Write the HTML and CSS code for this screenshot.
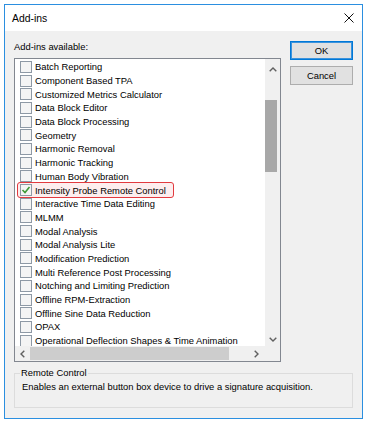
FILE: index.html
```html
<!DOCTYPE html>
<html lang="en">
<head>
    <meta charset="UTF-8">
    <meta name="viewport" content="width=device-width, initial-scale=1.0">
    <title>Add-ins</title>
    <link rel="stylesheet" href="styles.css">
</head>
<body>

<div class="dialog">
    <div class="titlebar">
        <span class="title">Add-ins</span>
        <svg class="close" width="10" height="10" viewBox="0 0 10 10">
            <path d="M0.5 0.5 L9.5 9.5 M9.5 0.5 L0.5 9.5" stroke="#111" stroke-width="1" fill="none"/>
        </svg>
    </div>

    <div class="content">
        <div class="main">
            <div class="left">
                <div class="label">Add-ins available:</div>
                <div class="listbox">
                    <ul class="items">
                        <li class="item"><span class="check"></span>Batch Reporting</li>
                        <li class="item"><span class="check"></span>Component Based TPA</li>
                        <li class="item"><span class="check"></span>Customized Metrics Calculator</li>
                        <li class="item"><span class="check"></span>Data Block Editor</li>
                        <li class="item"><span class="check"></span>Data Block Processing</li>
                        <li class="item"><span class="check"></span>Geometry</li>
                        <li class="item"><span class="check"></span>Harmonic Removal</li>
                        <li class="item"><span class="check"></span>Harmonic Tracking</li>
                        <li class="item"><span class="check"></span>Human Body Vibration</li>
                        <li class="item marked">
                            <span class="check">
                                <svg width="10" height="10" viewBox="0 0 10 10">
                                    <path d="M1.5 5 L4 7.5 L8.5 2" stroke="#3d9a35" stroke-width="1.6" fill="none"/>
                                </svg>
                            </span>Intensity Probe Remote Control
                        </li>
                        <li class="item"><span class="check"></span>Interactive Time Data Editing</li>
                        <li class="item"><span class="check"></span>MLMM</li>
                        <li class="item"><span class="check"></span>Modal Analysis</li>
                        <li class="item"><span class="check"></span>Modal Analysis Lite</li>
                        <li class="item"><span class="check"></span>Modification Prediction</li>
                        <li class="item"><span class="check"></span>Multi Reference Post Processing</li>
                        <li class="item"><span class="check"></span>Notching and Limiting Prediction</li>
                        <li class="item"><span class="check"></span>Offline RPM-Extraction</li>
                        <li class="item"><span class="check"></span>Offline Sine Data Reduction</li>
                        <li class="item"><span class="check"></span>OPAX</li>
                        <li class="item"><span class="check"></span>Operational Deflection Shapes &amp; Time Animation</li>
                    </ul>

                    <div class="vscroll">
                        <div class="arrow up">
                            <svg width="8" height="5" viewBox="0 0 8 5"><path d="M0.7 4.3 L4 1 L7.3 4.3" stroke="#606060" stroke-width="1.4" fill="none"/></svg>
                        </div>
                        <div class="track"><div class="thumb"></div></div>
                        <div class="arrow down">
                            <svg width="8" height="5" viewBox="0 0 8 5"><path d="M0.7 0.7 L4 4 L7.3 0.7" stroke="#606060" stroke-width="1.4" fill="none"/></svg>
                        </div>
                    </div>

                    <div class="hscroll">
                        <div class="arrow left-btn">
                            <svg width="5" height="8" viewBox="0 0 5 8"><path d="M4.3 0.7 L1 4 L4.3 7.3" stroke="#606060" stroke-width="1.4" fill="none"/></svg>
                        </div>
                        <div class="track"><div class="thumb"></div></div>
                        <div class="arrow right-btn">
                            <svg width="5" height="8" viewBox="0 0 5 8"><path d="M0.7 0.7 L4 4 L0.7 7.3" stroke="#606060" stroke-width="1.4" fill="none"/></svg>
                        </div>
                    </div>

                    <div class="corner"></div>
                </div>
            </div>

            <div class="buttons">
                <button class="btn default">OK</button>
                <button class="btn">Cancel</button>
            </div>
        </div>

        <fieldset class="group">
            <legend>Remote Control</legend>
            <p>Enables an external button box device to drive a signature acquisition.</p>
        </fieldset>
    </div>
</div>

</body>
</html>
```

FILE: styles.css
```css
body {
    font-family: "Liberation Sans", Arial, sans-serif;
    font-size: 9.4px;
    color: #000;
    background-color: #fff;
    margin: 0;
    padding: 0;
}
.dialog {
    margin: 4px 0 0 4px;
    width: 359px;
    height: 415px;
    box-sizing: border-box;
    border: 1px solid #2b8fe0;
    background-color: #f0f0f0;
    display: flex;
    flex-direction: column;
}
.titlebar {
    height: 26px;
    background-color: #fff;
    display: flex;
    align-items: center;
    justify-content: space-between;
    padding: 0 8px 0 7px;
}
.title {
    font-size: 10.4px;
}
.close {
    display: block;
    margin-top: -1px;
}
.content {
    flex: 1;
    padding: 10px 9px 9px 9px;
}
.main {
    display: flex;
    gap: 9px;
}
.left {
    width: 267px;
}
.label {
    height: 12px;
    line-height: 12px;
    margin-bottom: 5px;
}
.listbox {
    width: 267px;
    height: 304px;
    box-sizing: border-box;
    border: 1px solid #828790;
    background-color: #fff;
    display: grid;
    grid-template-columns: 1fr 15px;
    grid-template-rows: 1fr 15px;
}
.items {
    list-style: none;
    margin: 0;
    padding: 1px 0 0 0;
    overflow: hidden;
}
.item {
    height: 13.7px;
    display: flex;
    align-items: center;
    padding-left: 5px;
    white-space: nowrap;
    position: relative;
    z-index: 0;
}
.check {
    width: 12px;
    height: 12px;
    box-sizing: border-box;
    border: 1px solid #8e99a5;
    background-color: #f4f4f4;
    margin-right: 3px;
    display: flex;
    align-items: center;
    justify-content: center;
    flex-shrink: 0;
}
.marked::before {
    content: "";
    position: absolute;
    left: 2px;
    top: -1px;
    width: 157px;
    height: 15.5px;
    box-sizing: border-box;
    border: 1px solid #e23a3f;
    border-radius: 3px;
    background-color: #fdeeee;
    z-index: -1;
}
.vscroll {
    background-color: #f0f0f0;
    display: flex;
    flex-direction: column;
}
.vscroll .up {
    height: 20px;
}
.vscroll .down {
    height: 13px;
}
.vscroll .track {
    flex: 1;
}
.vscroll .thumb {
    margin-top: 21px;
    width: 12px;
    height: 72px;
    background-color: #a8a8a8;
}
.arrow {
    display: flex;
    align-items: center;
    justify-content: center;
}
.arrow svg {
    display: block;
}
.hscroll {
    background-color: #f0f0f0;
    display: flex;
}
.hscroll .left-btn {
    width: 15px;
}
.hscroll .right-btn {
    width: 17px;
}
.hscroll .track {
    flex: 1;
    padding: 1px 0;
}
.hscroll .thumb {
    width: 199px;
    height: 13px;
    background-color: #cdcdcd;
}
.corner {
    background-color: #f0f0f0;
}
.buttons {
    width: 63px;
    display: flex;
    flex-direction: column;
    gap: 6px;
}
.btn {
    height: 19px;
    box-sizing: border-box;
    font-family: "Liberation Sans", Arial, sans-serif;
    font-size: 9.4px;
    color: #000;
    background-color: #e1e1e1;
    border: 1px solid #adadad;
    padding: 0;
}
.btn.default {
    border-color: #0078d7;
    box-shadow: inset 0 0 0 1px #3c93dc;
}
.group {
    margin: 5px 0 0 0;
    padding: 2px 7px 14px 7px;
    border: 1px solid #dcdcdc;
    min-width: 0;
}
.group legend {
    padding: 0 1px;
    margin-left: -2px;
    line-height: 12px;
}
.group p {
    margin: 0;
    line-height: 12px;
}
```
